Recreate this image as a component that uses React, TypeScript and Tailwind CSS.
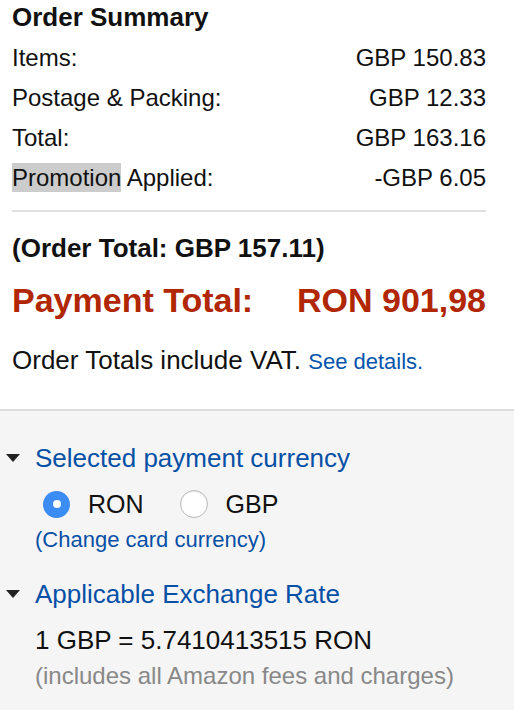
import React from "react";

const Row = ({ label, value }: { label: React.ReactNode; value: string }) => (
  <div className="flex justify-between h-[40px] leading-[40px] text-[24px] text-[#111]">
    <span>{label}</span>
    <span>{value}</span>
  </div>
);

const Tri = () => (
  <svg width="14" height="8" viewBox="0 0 14 8" className="shrink-0">
    <path d="M0 0 L14 0 L7 8 Z" fill="#222" />
  </svg>
);

export default function App() {
  return (
    <div className="w-[514px] h-[710px] bg-white overflow-hidden" style={{ fontFamily: '"Liberation Sans", Arial, sans-serif' }}>
      <div className="pl-[12px] pr-[28px] pt-[1px]">
        <div className="text-[26px] font-bold leading-[32px] text-[#111] h-[32px]">Order Summary</div>
        <div className="mt-[5px]">
          <Row label="Items:" value="GBP 150.83" />
          <Row label="Postage & Packing:" value="GBP 12.33" />
          <Row label="Total:" value="GBP 163.16" />
          <Row
            label={
              <>
                <span className="bg-[#cccccc] py-[1px]">Promotion</span> Applied:
              </>
            }
            value="-GBP 6.05"
          />
        </div>
        <div className="mt-[12px] h-[2px] bg-[#e0e0e0]" />
        <div className="mt-[21.3px] text-[26px] font-bold leading-[30px] text-[#111]">(Order Total: GBP 157.11)</div>
        <div className="mt-[16.7px] flex justify-between text-[34px] font-bold leading-[40px] text-[#b12704]">
          <span>Payment Total:</span>
          <span>RON 901,98</span>
        </div>
        <div className="mt-[25.3px] text-[26px] leading-[30px] text-[#111]">
          Order Totals include VAT. <span className="text-[22px] text-[#0654ac]">See details.</span>
        </div>
        <div className="h-[31.5px]" />
      </div>
      <div className="h-[2px] bg-[#dddddd]" />
      <div className="bg-[#f5f5f5] h-full pl-[6px] pt-[31px]">
        <div className="flex items-center gap-[15px] h-[32px]">
          <Tri />
          <span className="text-[26px] leading-[32px] text-[#0650a6]">Selected payment currency</span>
        </div>
        <div className="mt-[13.5px] ml-[37px] flex items-center h-[34px] text-[25px] leading-[34px] text-[#111]">
          <span className="w-[27px] h-[27px] rounded-full bg-[#3b8cf5] flex items-center justify-center">
            <span className="w-[8px] h-[8px] rounded-full bg-white" />
          </span>
          <span className="ml-[18px]">RON</span>
          <span className="ml-[36px] w-[28px] h-[28px] rounded-full bg-white border border-[#b8b8b8] shadow-[inset_0_1px_1px_rgba(0,0,0,0.08)]" />
          <span className="ml-[18px]">GBP</span>
        </div>
        <div className="mt-[4.4px] ml-[29px] text-[22px] leading-[28px] text-[#0650a6]">(Change card currency)</div>
        <div className="mt-[24.3px] flex items-center gap-[15px] h-[32px]">
          <Tri />
          <span className="text-[26px] leading-[32px] text-[#0650a6]">Applicable Exchange Rate</span>
        </div>
        <div className="mt-[13px] ml-[29px] text-[26px] leading-[34px] text-[#111]">1 GBP = 5.7410413515 RON</div>
        <div className="mt-[5px] ml-[29px] text-[24px] leading-[28px] text-[#888888]">(includes all Amazon fees and charges)</div>
      </div>
    </div>
  );
}
